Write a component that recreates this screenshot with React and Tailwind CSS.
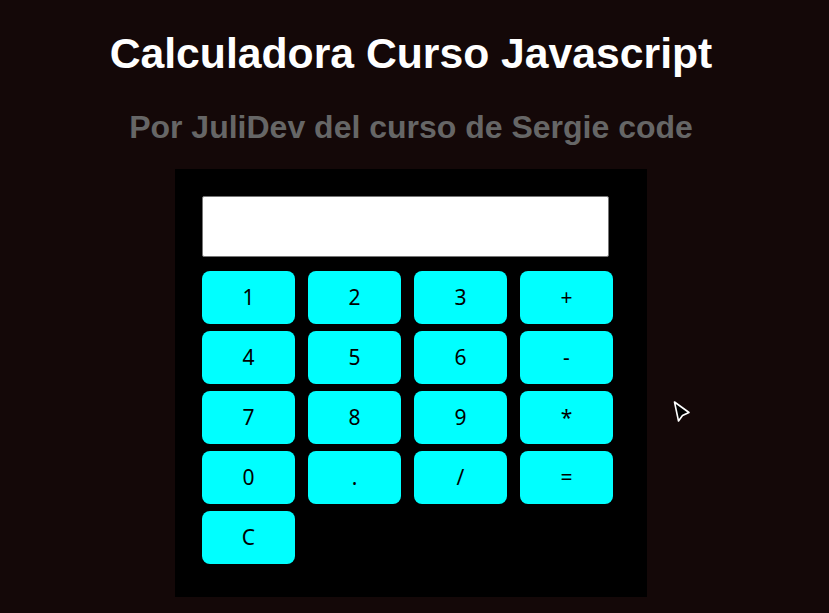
import React, { useState } from 'react';

const keys = ['1', '2', '3', '+', '4', '5', '6', '-', '7', '8', '9', '*', '0', '.', '/', '=', 'C'];

export default function App() {
    const [display, setDisplay] = useState('');

    const press = (k) => {
        if (k === 'C') return setDisplay('');
        if (k === '=') {
            try {
                // eslint-disable-next-line no-new-func
                setDisplay(String(Function(`return (${display})`)()));
            } catch {
                setDisplay('Error');
            }
            return;
        }
        setDisplay(display + k);
    };

    return (
        <div className="relative min-h-[613px] bg-[#140808] font-['Liberation_Sans',Arial,sans-serif] overflow-hidden">
            <div className="w-[822px]">
                <h1 className="pt-[28px] text-center text-[42.7px] leading-[50px] font-bold text-white">Calculadora Curso Javascript</h1>
                <h2 className="mt-[31px] text-center text-[32px] leading-[36px] font-bold text-[#666666]">Por JuliDev del curso de Sergie code</h2>

                <div className="mx-auto mt-[24px] w-[472px] h-[428px] bg-black pt-[27px] pl-[27px]">
                    <input
                        type="text"
                        value={display}
                        readOnly
                        className="block w-[407px] h-[61px] bg-white border border-[#767676] rounded-[2px] px-2 text-2xl text-black"
                    />
                    <div className="mt-[14px] grid grid-cols-[repeat(4,93px)] gap-x-[13px] gap-y-[7px]">
                        {keys.map((k) => (
                            <button
                                key={k}
                                onClick={() => press(k)}
                                className="h-[53px] rounded-[8px] bg-[#00ffff] text-black text-[21px] font-['Noto_Sans',sans-serif]"
                            >
                                {k}
                            </button>
                        ))}
                    </div>
                </div>
            </div>

            {/* curseur */}
            <svg className="absolute left-[672px] top-[400px]" width="20" height="24" viewBox="0 0 20 24">
                <path d="M2.5 2 L6.5 21 L10.5 15.5 L17 12.5 Z" fill="#000" stroke="#fff" strokeWidth="1.6" strokeLinejoin="round" />
            </svg>
        </div>
    );
}
